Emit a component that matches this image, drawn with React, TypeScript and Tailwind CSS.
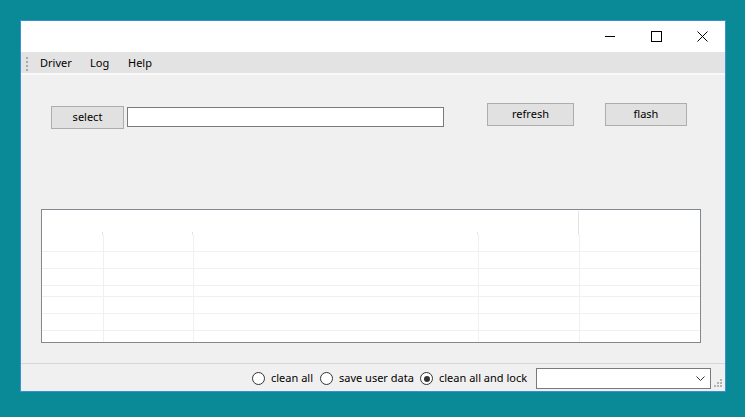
import React from "react";

const cols = [
  "w-[62px] border-r",
  "w-[90px] border-r",
  "w-[285px] border-r",
  "w-[101px] border-r",
  "flex-1",
];

const rowHeights = ["h-[17px]", "h-[17px]", "h-[17px]", "h-[11px]", "h-[17px]", "h-[17px]"];

function Radio({ checked }: { checked?: boolean }) {
  return (
    <div className="w-[13px] h-[13px] rounded-full border border-[#333] bg-white flex items-center justify-center shrink-0">
      {checked && <div className="w-[6px] h-[6px] rounded-full bg-[#333]" />}
    </div>
  );
}

function Button({ label, className }: { label: string; className: string }) {
  return (
    <div
      className={`h-[23px] bg-[#e1e1e1] border border-[#adadad] flex items-center justify-center text-black ${className}`}
    >
      {label}
    </div>
  );
}

export default function App() {
  return (
    <div
      className="w-[745px] h-[417px] bg-[#0a8a97] pt-[20px] pl-[20px] text-[11px] text-black"
      style={{ fontFamily: '"Noto Sans", "Liberation Sans", sans-serif' }}
    >
      <div className="w-[706px] h-[372px] border border-[#3b8fd9] bg-white flex flex-col">
        {/* title bar */}
        <div className="h-[31px] flex justify-end bg-white shrink-0">
          <div className="w-[46px] flex items-center justify-center">
            <svg width="10" height="1">
              <rect x="0" y="0" width="10" height="1" fill="#000" />
            </svg>
          </div>
          <div className="w-[46px] flex items-center justify-center">
            <svg width="11" height="11">
              <rect x="0.5" y="0.5" width="10" height="10" fill="none" stroke="#000" />
            </svg>
          </div>
          <div className="w-[46px] flex items-center justify-center">
            <svg width="11" height="11">
              <path d="M0.5 0.5 L10.5 10.5 M10.5 0.5 L0.5 10.5" stroke="#000" strokeWidth="1" fill="none" />
            </svg>
          </div>
        </div>

        {/* menu */}
        <div className="h-[23px] bg-[#e3e3e3] border-b-2 border-[#f9f9f9] flex items-center pl-[5px] pt-[2px] shrink-0">
          <div className="w-[3px] flex flex-col gap-[2px]">
            {[0, 1, 2, 3].map((i) => (
              <div key={i} className="w-[2px] h-[2px] bg-[#a9a9a9]" />
            ))}
          </div>
          <span className="ml-[11px] w-[50px]">Driver</span>
          <span className="w-[38px]">Log</span>
          <span>Help</span>
        </div>

        {/* client */}
        <div className="h-[288px] bg-[#f0f0f0] flex flex-col shrink-0">
          <div className="mt-[28px] h-[26px] flex items-start pl-[30px]">
            <Button label="select" className="mt-[3px] w-[73px]" />
            <div className="ml-[3px] mt-[4px] w-[317px] h-[20px] bg-white border border-[#7a7a7a]" />
            <Button label="refresh" className="ml-[43px] w-[87px]" />
            <Button label="flash" className="ml-[31px] w-[82px]" />
          </div>

          <div className="mt-[80px] ml-[20px] w-[660px] h-[134px] border border-[#828790] bg-white flex flex-col">
            <div className="h-[25px] flex shrink-0">
              {cols.map((c, i) => (
                <div
                  key={i}
                  className={`${c.replace(" border-r", "")} flex justify-end ${
                    i === 3 ? "items-stretch pt-px" : "items-end"
                  } pr-px`}
                >
                  {i < 3 && <div className="w-px h-[3px] bg-[#e3e3e3]" />}
                  {i === 3 && <div className="w-px bg-[#e3e3e3]" />}
                </div>
              ))}
            </div>
            {rowHeights.map((h, r) => (
              <div key={r} className={`${h} flex border-b border-[#f0f0f0] shrink-0`}>
                {cols.map((c, i) => (
                  <div key={i} className={`${c} border-[#f0f0f0]`} />
                ))}
              </div>
            ))}
            <div className="flex-1 flex">
              {cols.map((c, i) => (
                <div key={i} className={`${c} border-[#f0f0f0]`} />
              ))}
            </div>
          </div>
        </div>

        {/* status bar */}
        <div className="flex-1 border-t border-[#d7d7d7] bg-[#f0f0f0] flex items-center pt-[2px] pl-[231px]">
          <Radio />
          <span className="ml-[6px] w-[42px] whitespace-nowrap">clean all</span>
          <div className="ml-[7px]">
            <Radio />
          </div>
          <span className="ml-[6px] w-[74px] whitespace-nowrap">save user data</span>
          <div className="ml-[7px]">
            <Radio checked />
          </div>
          <span className="ml-[6px] w-[91px] whitespace-nowrap">clean all and lock</span>
          <div className="ml-[6px] w-[175px] h-[21px] bg-white border border-[#7a7a7a] flex items-center justify-end pr-[5px]">
            <svg width="9" height="5">
              <path d="M0.5 0.5 L4.5 4.5 L8.5 0.5" stroke="#333" fill="none" />
            </svg>
          </div>
          <svg width="8" height="9" className="ml-[3px] self-end mb-[3px]">
            <rect x="6" y="0" width="2" height="2" fill="#b4b4a8" />
            <rect x="3" y="3" width="2" height="2" fill="#b4b4a8" />
            <rect x="6" y="3" width="2" height="2" fill="#b4b4a8" />
            <rect x="0" y="6" width="2" height="2" fill="#b4b4a8" />
            <rect x="3" y="6" width="2" height="2" fill="#b4b4a8" />
            <rect x="6" y="6" width="2" height="2" fill="#b4b4a8" />
          </svg>
        </div>
      </div>
    </div>
  );
}
